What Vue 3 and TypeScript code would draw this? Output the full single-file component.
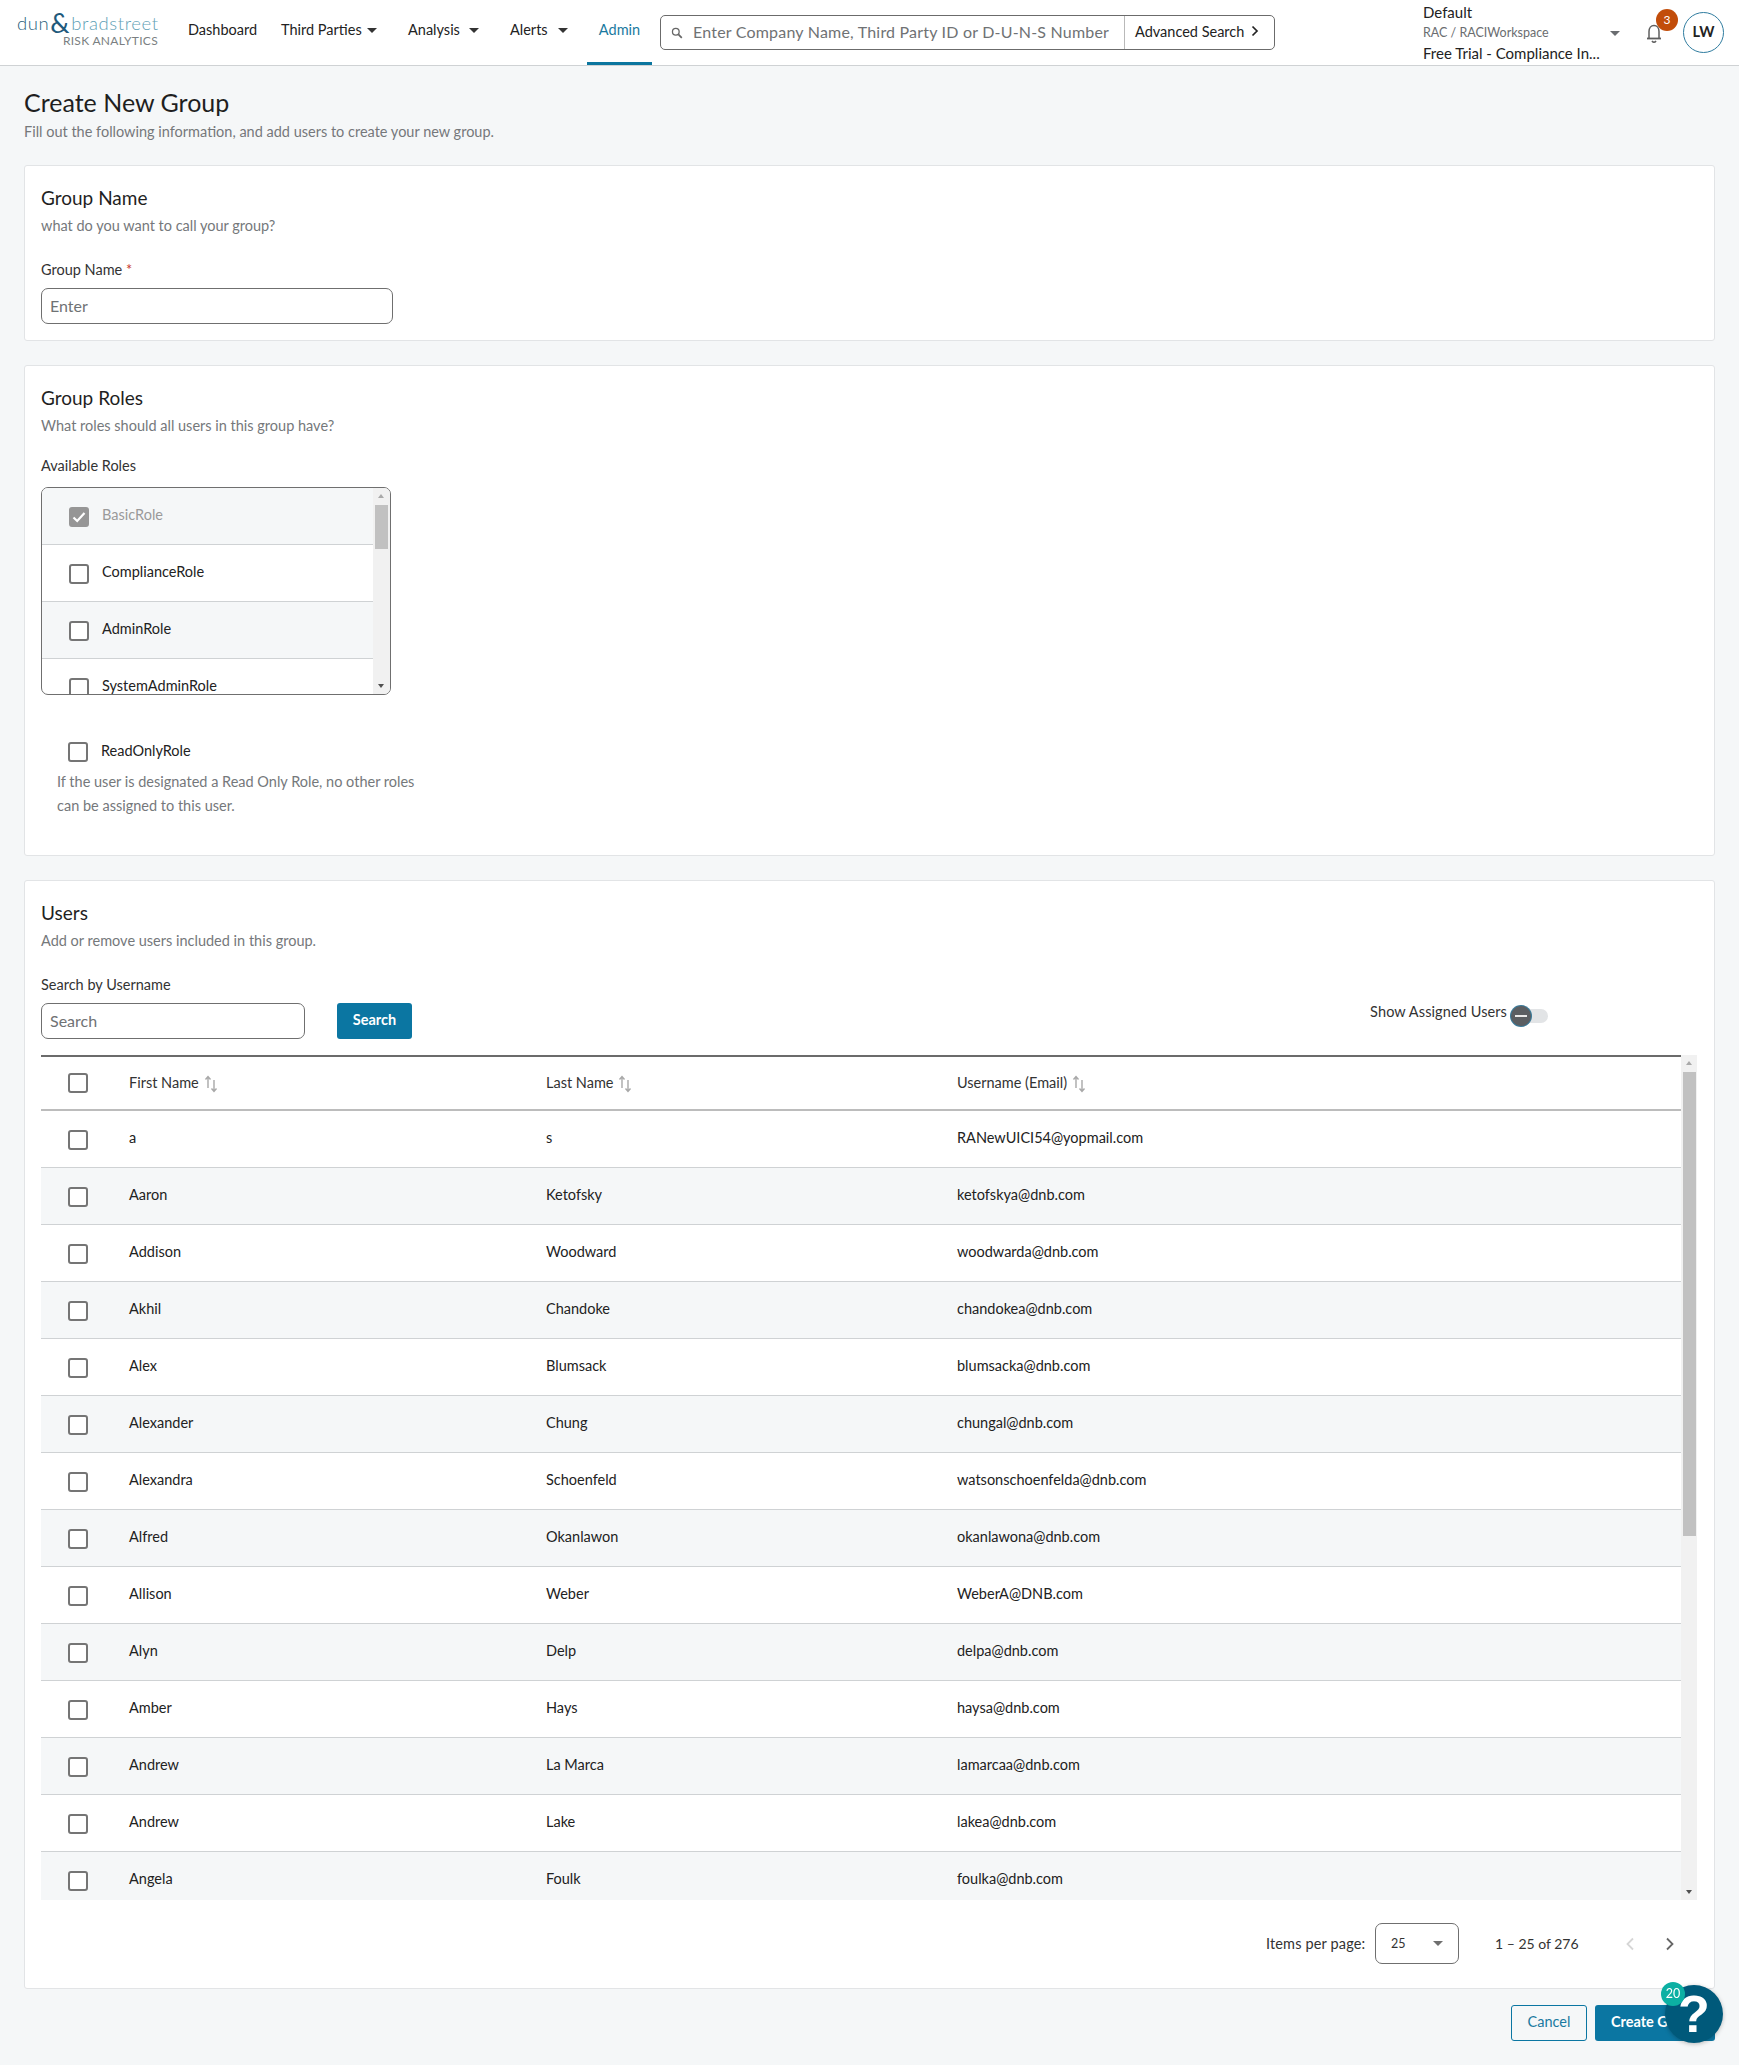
<script setup lang="ts">
interface User { first: string; last: string; email: string }
interface Role { name: string; disabled?: boolean }

const navItems = [
  { label: 'Dashboard', width: 93, caret: false },
  { label: 'Third Parties', width: 127, caret: true },
  { label: 'Analysis', width: 102, caret: true },
  { label: 'Alerts', width: 77, caret: true },
]

const roles: Role[] = [
  { name: 'BasicRole', disabled: true },
  { name: 'ComplianceRole' },
  { name: 'AdminRole' },
  { name: 'SystemAdminRole' },
]

const columns = ['First Name', 'Last Name', 'Username (Email)']

const users: User[] = [
  { first: 'a', last: 's', email: 'RANewUICI54@yopmail.com' },
  { first: 'Aaron', last: 'Ketofsky', email: 'ketofskya@dnb.com' },
  { first: 'Addison', last: 'Woodward', email: 'woodwarda@dnb.com' },
  { first: 'Akhil', last: 'Chandoke', email: 'chandokea@dnb.com' },
  { first: 'Alex', last: 'Blumsack', email: 'blumsacka@dnb.com' },
  { first: 'Alexander', last: 'Chung', email: 'chungal@dnb.com' },
  { first: 'Alexandra', last: 'Schoenfeld', email: 'watsonschoenfelda@dnb.com' },
  { first: 'Alfred', last: 'Okanlawon', email: 'okanlawona@dnb.com' },
  { first: 'Allison', last: 'Weber', email: 'WeberA@DNB.com' },
  { first: 'Alyn', last: 'Delp', email: 'delpa@dnb.com' },
  { first: 'Amber', last: 'Hays', email: 'haysa@dnb.com' },
  { first: 'Andrew', last: 'La Marca', email: 'lamarcaa@dnb.com' },
  { first: 'Andrew', last: 'Lake', email: 'lakea@dnb.com' },
  { first: 'Angela', last: 'Foulk', email: 'foulka@dnb.com' },
]
</script>

<template>
  <div class="page">
    <header class="topbar">
      <div class="logo">
        <div class="logo-main"><span class="l-dun">dun</span><span class="l-amp">&amp;</span><span class="l-brad">bradstreet</span></div>
        <div class="logo-sub">RISK ANALYTICS</div>
      </div>
      <nav class="nav">
        <div v-for="item in navItems" :key="item.label" class="nav-item" :style="{ width: item.width + 'px' }">
          <span>{{ item.label }}</span>
          <i v-if="item.caret" class="caret nav-caret"></i>
        </div>
        <div class="nav-tab">Admin</div>
      </nav>
      <div class="global-search">
        <svg class="search-icon" width="12" height="12" viewBox="0 0 14 14" fill="none" stroke="#666" stroke-width="1.5">
          <circle cx="5.6" cy="5.6" r="3.9" />
          <path d="M8.6 8.6 L12.6 12.6" stroke-width="2" />
        </svg>
        <input class="global-input" placeholder="Enter Company Name, Third Party ID or D-U-N-S Number" />
        <div class="adv">
          <span>Advanced Search</span>
          <svg width="8" height="12" viewBox="0 0 8 12" fill="none" stroke="#222" stroke-width="1.7"><path d="M1.5 1.5 L6 6 L1.5 10.5" /></svg>
        </div>
      </div>
      <div class="account">
        <div class="acc-line">Default</div>
        <div class="acc-line acc-small">RAC / RACIWorkspace</div>
        <div class="acc-line">Free Trial - Compliance In...</div>
      </div>
      <i class="caret acc-caret"></i>
      <div class="bell">
        <svg width="20" height="22" viewBox="0 0 20 22" fill="none" stroke="#5f5f5f" stroke-width="1.5">
          <path d="M5 16 V9.5 C5 6 7 3.500 10 3.500 C13 3.500 15 6 15 9.500 V16" />
          <path d="M3 16.500 H17" stroke-width="1.8" />
          <path d="M8 19 Q10 21.500 12 19" stroke-width="1.7" />
        </svg>
        <span class="bell-badge">3</span>
      </div>
      <div class="avatar">LW</div>
    </header>

    <main class="main">
      <h1 class="title">Create New Group</h1>
      <p class="subtitle">Fill out the following information, and add users to create your new group.</p>

      <section class="card card-name">
        <h2 class="card-title">Group Name</h2>
        <p class="card-sub">what do you want to call your group?</p>
        <label class="field-label label-first">Group Name <span class="req">*</span></label>
        <input class="text-input name-input" placeholder="Enter" />
      </section>

      <section class="card card-roles">
        <h2 class="card-title">Group Roles</h2>
        <p class="card-sub">What roles should all users in this group have?</p>
        <label class="field-label label-roles">Available Roles</label>
        <div class="role-box">
          <div class="role-list">
            <div v-for="(role, i) in roles" :key="role.name" class="role-row" :class="{ alt: i % 2 === 0 }">
              <span class="check role-check" :class="{ checked: role.disabled }">
                <svg v-if="role.disabled" width="16" height="16" viewBox="0 0 16 16" fill="none" stroke="#fff" stroke-width="2.2"><path d="M2.5 8.500 L6.200 12 L13.500 4" /></svg>
              </span>
              <span class="role-name" :class="{ muted: role.disabled }">{{ role.name }}</span>
            </div>
          </div>
          <div class="sb sb-roles">
            <i class="sb-up"></i>
            <div class="sb-thumb thumb-roles"></div>
            <i class="sb-down"></i>
          </div>
        </div>
        <div class="readonly">
          <span class="check"></span>
          <span class="role-name">ReadOnlyRole</span>
        </div>
        <p class="readonly-help">If the user is designated a Read Only Role, no other roles<br />can be assigned to this user.</p>
      </section>

      <section class="card card-users">
        <h2 class="card-title">Users</h2>
        <p class="card-sub">Add or remove users included in this group.</p>
        <label class="field-label label-users">Search by Username</label>
        <div class="search-row">
          <input class="text-input user-input" placeholder="Search" />
          <button class="btn-primary search-btn">Search</button>
          <div class="assigned">
            <span class="assigned-label">Show Assigned Users</span>
            <span class="toggle"><span class="knob"></span></span>
          </div>
        </div>
        <div class="table-wrap">
          <div class="table">
            <div class="t-head t-grid">
              <span class="check"></span>
              <span v-for="c in columns" :key="c" class="th">
                <span class="th-label">{{ c }}</span>
                <svg class="sort" width="14" height="18" viewBox="0 0 14 18" fill="none" stroke="#a8a8a8" stroke-width="1.4">
                  <path d="M4 13 V2 M1.500 4.500 L4 1.500 L6.500 4.500" />
                  <path d="M10 5 V16 M7.500 13.500 L10 16.500 L12.500 13.500" />
                </svg>
              </span>
            </div>
            <div v-for="(u, i) in users" :key="u.email" class="t-row t-grid" :class="{ alt: i % 2 === 1 }">
              <span class="check row-check"></span>
              <span class="cell">{{ u.first }}</span>
              <span class="cell">{{ u.last }}</span>
              <span class="cell">{{ u.email }}</span>
            </div>
          </div>
          <div class="sb sb-table">
            <i class="sb-up"></i>
            <div class="sb-thumb thumb-table"></div>
            <i class="sb-down"></i>
          </div>
        </div>
        <div class="pager">
          <span class="pager-label">Items per page:</span>
          <div class="pager-select"><span>25</span><i class="caret select-caret"></i></div>
          <span class="pager-range">1 – 25 of 276</span>
          <svg class="chev-prev" width="10" height="14" viewBox="0 0 10 14" fill="none" stroke="#d6d6d6" stroke-width="1.8"><path d="M8 1.500 L2.500 7 L8 12.500" /></svg>
          <svg class="chev-next" width="10" height="14" viewBox="0 0 10 14" fill="none" stroke="#666" stroke-width="1.8"><path d="M2 1.500 L7.500 7 L2 12.500" /></svg>
        </div>
      </section>

      <div class="actions">
        <button class="btn-outline">Cancel</button>
        <button class="btn-primary create-btn">Create Group</button>
      </div>
    </main>

    <div class="help">
      <span class="help-q">?</span>
      <span class="help-badge">20</span>
    </div>
  </div>
</template>

<style>
html, body { margin: 0; background: #f5f7f8; }
</style>

<style scoped>
.page {
  width: 1739px;
  height: 2065px;
  overflow: hidden;
  background: #f5f7f8;
  font-family: Lato, "Open Sans", sans-serif;
  color: #222;
  font-size: 14.5px;
}
* { box-sizing: border-box; }
h1, h2, p { margin: 0; font-weight: 400; }
input { font-family: inherit; outline: none; }
input::placeholder { color: #6f7274; opacity: 1; }

.topbar {
  display: flex;
  align-items: flex-start;
  height: 66px;
  background: #fff;
  border-bottom: 1px solid #cfd2d4;
  padding-left: 17px;
}
.logo { width: 141px; margin-top: 10px; }
.logo-main { display: flex; align-items: center; height: 25px; font-size: 18.500px; font-weight: 300; letter-spacing: .6px; white-space: nowrap; }
.l-dun { color: #2c5f7c; }
.l-amp { color: #1f5a7c; font-size: 27px; line-height: 25px; margin: 0 1px; font-weight: 400; }
.l-brad { color: #5f9fb6; }
.logo-sub { font-size: 12px; letter-spacing: .3px; color: #7b7f82; text-align: right; line-height: 14px; margin-top: -1px; white-space: nowrap; }

.nav { display: flex; height: 65px; margin-left: 30px; }
.nav-item { display: flex; align-items: flex-start; padding-top: 20px; line-height: 20px; white-space: nowrap; }
.caret { display: block; width: 0; height: 0; border-left: 5px solid transparent; border-right: 5px solid transparent; border-top: 5px solid #333; }
.nav-caret { margin-left: auto; margin-right: 31px; margin-top: 8px; }
.nav-item:nth-child(4) .nav-caret { margin-right: 19px; }
.nav-tab { width: 65px; text-align: center; padding-top: 20px; line-height: 20px; color: #1a7aa0; border-bottom: 3px solid #0b769f; height: 65px; }

.global-search {
  display: flex;
  align-items: center;
  margin: 15px 0 0 8px;
  width: 615px;
  height: 35px;
  border: 1px solid #6b6b6b;
  border-radius: 5px;
  padding-left: 10px;
}
.search-icon { flex: none; }
.global-input { border: 0; flex: 1; min-width: 0; height: 30px; margin-left: 10px; padding: 0 0 3px; font-size: 16px; letter-spacing: .2px; background: transparent; }
.adv { display: flex; align-items: center; gap: 7px; width: 150px; height: 100%; border-left: 1px solid #b9b9b9; padding: 0 0 3px 10px; white-space: nowrap; }

.account { width: 187px; margin-left: 148px; padding-top: 2px; white-space: nowrap; }
.acc-line { height: 20.500px; line-height: 20px; font-size: 15px; }
.acc-line.acc-small { font-size: 12.500px; color: #6a6d70; }
.acc-caret { margin: 31px 0 0 0; border-top-color: #6a6d70; }
.bell { position: relative; margin: 22px 0 0 24px; width: 20px; height: 22px; }
.bell-badge { position: absolute; left: 12px; top: -13px; width: 22px; height: 22px; border-radius: 50%; background: #c24d0a; color: #fff; font-size: 12px; text-align: center; line-height: 21px; }
.avatar { width: 41px; height: 41px; margin: 12px 0 0 19px; border: 1.5px solid #2f7c9f; border-radius: 50%; text-align: center; line-height: 38px; font-weight: 700; font-size: 14.500px; color: #222; }

.main { padding: 20px 24px 0; }
.title { font-size: 25px; line-height: 32px; color: #1f1f1f; }
.subtitle { line-height: 20px; margin-top: 4px; color: #75787b; }

.card { background: #fff; border: 1px solid #e2e4e6; border-radius: 3px; }
.card-name { margin-top: 23px; height: 176px; padding: 20px 16px 0; }
.card-roles { margin-top: 24px; height: 491px; padding: 20px 16px 0; }
.card-users { margin-top: 24px; height: 1109px; padding: 20px 17px 0 16px; }
.card-title { font-size: 19px; line-height: 24px; color: #1f1f1f; }
.card-sub { line-height: 20px; margin-top: 6px; color: #75787b; }
.field-label { display: block; line-height: 20px; color: #333; }
.label-first { margin-top: 24px; }
.label-users { margin-top: 24px; }
.label-roles { margin-top: 20px; }
.req { color: #c8342c; }

.text-input { display: block; height: 36px; border: 1px solid #6f6f6f; border-radius: 7px; margin-top: 8px; padding: 0 8px 1px; font-size: 16px; background: #fff; }
.name-input { width: 352px; }
.user-input { width: 264px; margin-top: 0; }

.role-box { display: flex; width: 350px; height: 208px; margin-top: 11px; border: 1px solid #6f6f6f; border-radius: 7px; overflow: hidden; }
.role-list { flex: 1; min-width: 0; overflow: hidden; }
.role-row { display: flex; align-items: center; gap: 13px; height: 57px; padding-left: 27px; border-bottom: 1px solid #cfd2d4; }
.role-row.alt { background: #f5f7f8; }
.check { display: flex; align-items: center; justify-content: center; flex: none; width: 20px; height: 20px; border: 2px solid #757575; border-radius: 3px; background: #fff; }
.role-check { margin-top: 2px; }
.check.checked { background: #969696; border-color: #969696; }
.role-name { color: #222; position: relative; top: -2px; }
.role-name.muted { color: #9a9a9a; }

.sb { position: relative; flex: none; background: #f1f1f1; }
.sb-roles { width: 17px; }
.sb-table { width: 16px; }
.sb-thumb { position: absolute; background: #c1c1c1; }
.thumb-roles { left: 2px; right: 2px; top: 17px; height: 44px; }
.thumb-table { left: 2px; right: 1px; top: 17px; height: 464px; }
.sb-up, .sb-down { position: absolute; left: 50%; margin-left: -3.500px; width: 0; height: 0; border-left: 3.500px solid transparent; border-right: 3.500px solid transparent; }
.sb-up { top: 6px; border-bottom: 4px solid #a9a9a9; }
.sb-down { bottom: 6px; border-top: 4px solid #505050; }

.readonly { display: flex; align-items: center; gap: 13px; margin-top: 47px; padding-left: 27px; }
.readonly-help { margin: 8px 0 0 16px; line-height: 24px; color: #75787b; }

.search-row { display: flex; align-items: flex-start; margin-top: 8px; height: 36px; }
.btn-primary { border: 0; background: #0b76a2; color: #fff; border-radius: 3px; font-family: inherit; font-size: 14.500px; font-weight: 700; padding: 0 0 3px; }
.search-btn { width: 75px; height: 36px; margin-left: 32px; }
.assigned { display: flex; align-items: flex-start; margin-left: auto; margin-right: 149px; }
.assigned-label { line-height: 20px; margin-top: -1px; color: #333; white-space: nowrap; letter-spacing: .1px; }
.toggle { position: relative; display: block; width: 36px; height: 14px; margin: 6px 0 0 5px; background: #e2e4e6; border-radius: 7px; }
.knob { position: absolute; left: -1px; top: -3px; width: 20px; height: 20px; border-radius: 50%; background: #5b5e62; box-shadow: 0 0 0 1px #3b7a99; }
.knob::after { content: ""; position: absolute; left: 4px; top: 9px; width: 12px; height: 2px; background: #e9e9e9; }

.table-wrap { display: flex; height: 845px; margin-top: 16px; overflow: hidden; }
.table { flex: 1; min-width: 0; border-top: 2px solid #6b6b6b; overflow: hidden; }
.t-grid { display: grid; grid-template-columns: 61px 417px 411px 1fr; padding-left: 27px; align-items: center; }
.t-head { height: 54px; border-bottom: 2px solid #bcbcbc; }
.t-row { height: 57px; border-bottom: 1px solid #cfd2d4; }
.t-row.alt { background: #f5f7f8; }
.row-check { margin-top: 1px; }
.cell { padding-bottom: 4px; }
.th { display: flex; align-items: center; gap: 5px; color: #333; }
.th-label { position: relative; top: -1px; }
.sort { flex: none; position: relative; top: 1px; }

.pager { display: flex; align-items: center; height: 41px; margin-top: 23px; padding-left: 1225px; color: #333; white-space: nowrap; }
.pager-label { width: 109px; letter-spacing: .15px; }
.pager-select { display: flex; align-items: center; justify-content: space-between; width: 84px; height: 41px; padding: 0 15px 0 15px; border: 1px solid #6f6f6f; border-radius: 7px; font-size: 12.500px; }
.select-caret { border-top-color: #6f6f6f; }
.pager-range { margin-left: 36px; width: 130px; font-size: 14px; }
.chev-next { margin-left: 30px; }

.actions { display: flex; justify-content: flex-end; gap: 8px; margin-top: 16px; }
.btn-outline { width: 76px; height: 36px; border: 1px solid #0b76a2; border-radius: 3px; background: transparent; color: #1a7aa0; font-family: inherit; font-size: 14.500px; padding: 0 0 3px; }
.create-btn { width: 120px; height: 36px; text-align: left; padding-left: 16px; }

.help { position: fixed; right: 16px; bottom: 22px; width: 58px; height: 58px; border-radius: 50%; background: #00597a; box-shadow: 0 1px 4px rgba(0,0,0,.25); text-align: center; }
.help-q { font-family: "Liberation Sans", sans-serif; font-weight: 700; font-size: 52px; line-height: 58px; color: #fff; }
.help-badge { position: absolute; left: -4px; top: -3px; width: 24px; height: 24px; border-radius: 50%; background: #0cb0a3; color: #fff; font-size: 12.500px; line-height: 24px; text-align: center; }
</style>
